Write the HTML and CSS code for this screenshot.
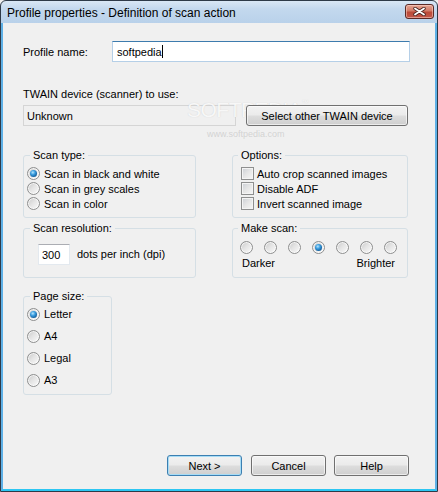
FILE: index.html
```html
<!DOCTYPE html>
<html>
<head>
<meta charset="utf-8">
<link rel="stylesheet" href="styles.css">
</head>
<body>
<div class="window">
  <div class="titlebar">
    <span class="title">Profile properties - Definition of scan action</span>
    <div class="close">
      <svg width="13" height="9" viewBox="0 0 13 9"><path d="M2 1.5 L11 7.5 M11 1.5 L2 7.5" stroke="#4a2420" stroke-width="3.4" stroke-linecap="round"/><path d="M2 1.5 L11 7.5 M11 1.5 L2 7.5" stroke="#ffffff" stroke-width="1.8" stroke-linecap="round"/></svg>
    </div>
  </div>
  <div class="client">
    <div class="watermark">SOFTPEDIA<sup>™</sup></div>
    <div class="watermark-url">www.softpedia.com</div>
    <div class="name-row">
      <span class="name-label">Profile name:</span>
      <div class="edit focused">softpedia<span class="caret"></span></div>
    </div>
    <div class="twain-label">TWAIN device (scanner) to use:</div>
    <div class="twain-row">
      <div class="static">Unknown</div>
      <div class="btn wide">Select other TWAIN device</div>
    </div>
    <div class="groups">
      <div class="group scantype">
        <span class="legend">Scan type:</span>
        <div class="opt"><span class="radio on"></span>Scan in black and white</div>
        <div class="opt"><span class="radio"></span>Scan in grey scales</div>
        <div class="opt"><span class="radio"></span>Scan in color</div>
      </div>
      <div class="group options">
        <span class="legend">Options:</span>
        <div class="opt"><span class="check"></span>Auto crop scanned images</div>
        <div class="opt"><span class="check"></span>Disable ADF</div>
        <div class="opt"><span class="check"></span>Invert scanned image</div>
      </div>
      <div class="group resolution">
        <span class="legend">Scan resolution:</span>
        <div class="edit small">300</div>
        <span class="dpi">dots per inch (dpi)</span>
      </div>
      <div class="group makescan">
        <span class="legend">Make scan:</span>
        <div class="radio-row">
          <span class="radio"></span><span class="radio"></span><span class="radio"></span><span class="radio on"></span><span class="radio"></span><span class="radio"></span><span class="radio"></span>
        </div>
        <div class="scale"><span>Darker</span><span>Brighter</span></div>
      </div>
    </div>
    <div class="group pagesize">
      <span class="legend">Page size:</span>
      <div class="opt tall"><span class="radio on"></span>Letter</div>
      <div class="opt tall"><span class="radio"></span>A4</div>
      <div class="opt tall"><span class="radio"></span>Legal</div>
      <div class="opt tall"><span class="radio"></span>A3</div>
    </div>
    <div class="footer">
      <div class="btn default">Next &gt;</div>
      <div class="btn">Cancel</div>
      <div class="btn">Help</div>
    </div>
  </div>
</div>
</body>
</html>
```

FILE: styles.css
```css
html, body {
  margin: 0;
  padding: 0;
  background: #f0f0f0;
}

.window {
  width: 438px;
  height: 492px;
  box-sizing: border-box;
  border: 1px solid #2e3a48;
  border-radius: 6px 6px 0 0;
  background: linear-gradient(#d9e7f5 0px, #c3d8ee 8px, #b9d1ea 22px);
  display: flex;
  flex-direction: column;
  font-family: "Liberation Sans", Arial, sans-serif;
  font-size: 11px;
  color: #000;
  overflow: hidden;
}

.titlebar {
  height: 22px;
  flex: none;
  display: flex;
  align-items: center;
  padding: 0 3px 0 6px;
}

.title {
  font-size: 12px;
  color: #000;
  flex: 1;
  padding-top: 1px;
}

.close {
  width: 29px;
  height: 15px;
  box-sizing: border-box;
  border: 1px solid #5b2a26;
  border-radius: 3px;
  background: linear-gradient(#e6a594 0%, #d27b68 45%, #bb4a38 55%, #c2574a 100%);
  box-shadow: inset 0 0 0 1px rgba(255, 220, 210, 0.5);
  display: flex;
  align-items: center;
  justify-content: center;
  margin-top: -1px;
}

.client {
  flex: 1;
  position: relative;
  background: #f0f0f0;
  border: 2px solid #5eb0e6;
  border-top: 0;
  border-bottom-color: #2cc6f2;
  display: flex;
  flex-direction: column;
  padding: 0 25px 0 20px;
}

.name-row {
  margin-top: 18px;
  display: flex;
  align-items: center;
  height: 21px;
}

.name-label {
  width: 89px;
  flex: none;
}

.edit {
  box-sizing: border-box;
  background: #fff;
  border: 1px solid #e3e9ef;
  border-top-color: #abadb3;
  padding: 0 3px;
  display: flex;
  align-items: center;
}

.edit.focused {
  flex: 1;
  height: 21px;
  border-color: #b5cfe7;
  border-top-color: #3d7bad;
  padding-left: 4px;
}

.caret {
  width: 1px;
  height: 13px;
  background: #000;
}

.twain-label {
  margin-top: 26px;
  line-height: 13px;
}

.twain-row {
  margin-top: 4px;
  display: flex;
  align-items: center;
  padding-right: 2px;
}

.static {
  width: 213px;
  height: 21px;
  box-sizing: border-box;
  border: 1px solid #d5d5d5;
  background: #f0f0f0;
  padding-left: 3px;
  display: flex;
  align-items: center;
}

.btn {
  box-sizing: border-box;
  width: 75px;
  height: 21px;
  border: 1px solid #707070;
  border-radius: 3px;
  background: linear-gradient(#f2f2f2 0%, #ebebeb 48%, #dddddd 52%, #cfcfcf 100%);
  box-shadow: inset 0 0 0 1px rgba(255, 255, 255, 0.6);
  display: flex;
  align-items: center;
  justify-content: center;
}

.btn.wide {
  width: 162px;
  margin-left: auto;
  position: relative;
  z-index: 1;
}

.btn.default {
  border-color: #3c7fb1;
  box-shadow: inset 0 0 0 1px #a6dcf6;
}

.groups {
  margin-top: 29px;
  display: grid;
  grid-template-columns: 173px 176px;
  column-gap: 36px;
  row-gap: 10px;
}

.group {
  position: relative;
  box-sizing: border-box;
  border: 1px solid #d5dfe5;
  border-radius: 3px;
}

.legend {
  position: absolute;
  top: -7px;
  left: 6px;
  line-height: 13px;
  padding: 0 3px;
  background: #f0f0f0;
}

.options .legend,
.makescan .legend {
  left: 5px;
}

.scantype,
.options {
  height: 63px;
  padding: 10px 0 0 3px;
}

.options {
  padding-left: 8px;
}

.opt {
  height: 15px;
  display: flex;
  align-items: center;
}

.opt.tall {
  height: 22px;
}

.radio {
  width: 13px;
  height: 13px;
  box-sizing: border-box;
  border-radius: 50%;
  border: 1px solid #8e8f8f;
  background: linear-gradient(135deg, #c9c9c9 0%, #e4e4e4 45%, #fbfbfb 100%);
  box-shadow: inset 0 0 0 1px rgba(255, 255, 255, 0.7);
  margin-right: 4px;
  flex: none;
  display: flex;
  align-items: center;
  justify-content: center;
}

.radio.on::after {
  content: "";
  width: 7px;
  height: 7px;
  border-radius: 50%;
  background: radial-gradient(circle at 40% 35%, #b7e6fd 0%, #3b9ee0 35%, #0d5592 80%, #0b4270 100%);
}

.check {
  width: 13px;
  height: 13px;
  box-sizing: border-box;
  border: 1px solid #8e8f8f;
  background: linear-gradient(135deg, #cbcfd5 0%, #e6e6e6 50%, #f7f7f7 100%);
  box-shadow: inset 0 0 0 1px #f4f4f4;
  margin-right: 3px;
  flex: none;
}

.resolution {
  height: 50px;
  display: flex;
  align-items: flex-start;
  padding: 15px 0 0 14px;
}

.edit.small {
  width: 32px;
  height: 21px;
}

.dpi {
  margin-left: 7px;
  line-height: 21px;
}

.makescan {
  height: 50px;
  padding: 12px 0 0 7px;
}

.radio-row {
  display: flex;
  gap: 11px;
}

.radio-row .radio {
  margin-right: 0;
}

.scale {
  display: flex;
  justify-content: space-between;
  line-height: 13px;
  margin-top: 3px;
  padding: 0 12px 0 2px;
}

.pagesize {
  width: 89px;
  height: 99px;
  margin-top: 18px;
  padding: 6px 0 0 3px;
}

.footer {
  margin-top: auto;
  display: flex;
  justify-content: flex-end;
  gap: 9px;
  padding-bottom: 13px;
  margin-right: 1px;
}

.footer .btn + .btn + .btn {
  margin-left: -1px;
}

.watermark {
  position: absolute;
  left: 184px;
  top: 75px;
  font-size: 21px;
  line-height: 24px;
  letter-spacing: -0.5px;
  color: rgba(255, 255, 255, 0.85);
  text-shadow: 0 0 1px rgba(120, 120, 120, 0.3);
  pointer-events: none;
  z-index: 0;
}

.watermark sup {
  font-size: 7px;
  vertical-align: top;
  line-height: 10px;
}

.watermark-url {
  position: absolute;
  left: 204px;
  top: 106px;
  font-size: 9px;
  color: rgba(190, 190, 190, 0.6);
  pointer-events: none;
}
```
